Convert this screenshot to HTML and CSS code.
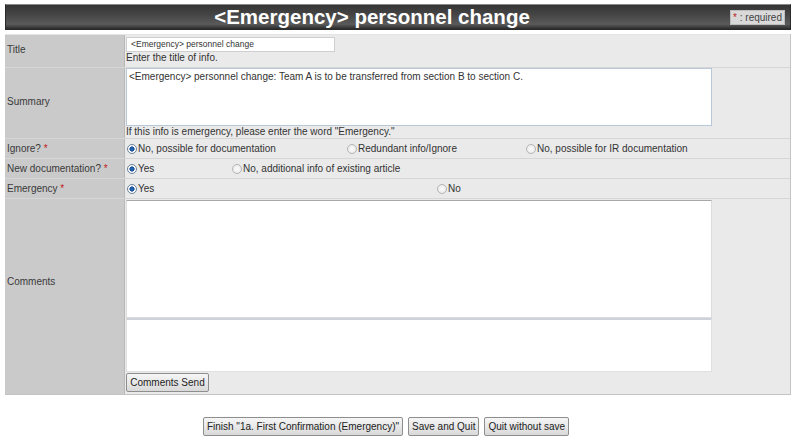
FILE: index.html
```html
<!DOCTYPE html>
<html>
<head>
<meta charset="utf-8">
<link rel="stylesheet" href="styles.css">
</head>
<body>
<div class="page">
  <div class="header">
    <h1 class="title">&lt;Emergency&gt; personnel change</h1>
    <span class="req"><span class="star">*</span> : required</span>
  </div>

  <div class="form">
    <div class="row row-title">
      <div class="label"><span>Title</span></div>
      <div class="value">
        <div class="input">&lt;Emergency&gt; personnel change</div>
        <div class="help">Enter the title of info.</div>
      </div>
    </div>

    <div class="row row-summary">
      <div class="label"><span>Summary</span></div>
      <div class="value">
        <div class="textarea summary">&lt;Emergency&gt; personnel change: Team A is to be transferred from section B to section C.</div>
        <div class="help">If this info is emergency, please enter the word "Emergency."</div>
      </div>
    </div>

    <div class="row row-radio">
      <div class="label"><span>Ignore? <span class="star">*</span></span></div>
      <div class="value options">
        <span class="opt w220"><span class="radio on"></span>No, possible for documentation</span>
        <span class="opt w179"><span class="radio"></span>Redundant info/Ignore</span>
        <span class="opt"><span class="radio"></span>No, possible for IR documentation</span>
      </div>
    </div>

    <div class="row row-radio">
      <div class="label"><span>New documentation? <span class="star">*</span></span></div>
      <div class="value options">
        <span class="opt w105"><span class="radio on"></span>Yes</span>
        <span class="opt"><span class="radio"></span>No, additional info of existing article</span>
      </div>
    </div>

    <div class="row row-radio">
      <div class="label"><span>Emergency <span class="star">*</span></span></div>
      <div class="value options">
        <span class="opt w310"><span class="radio on"></span>Yes</span>
        <span class="opt"><span class="radio"></span>No</span>
      </div>
    </div>

    <div class="row row-comments">
      <div class="label"><span>Comments</span></div>
      <div class="value">
        <div class="textarea comments-log"></div>
        <div class="textarea comments-new"></div>
        <button class="btn send">Comments Send</button>
      </div>
    </div>
  </div>

  <div class="actions">
    <button class="btn">Finish "1a. First Confirmation (Emergency)"</button>
    <button class="btn">Save and Quit</button>
    <button class="btn">Quit without save</button>
  </div>
</div>
</body>
</html>
```

FILE: styles.css
```css
* { box-sizing: border-box; }

html, body {
  margin: 0;
  padding: 0;
  background: #ffffff;
}

body {
  font-family: "Liberation Sans", Arial, sans-serif;
  font-size: 10px;
  color: #333333;
}

.page {
  padding: 4px 9px 0 5px;
}

/* Header */
.header {
  display: flex;
  align-items: center;
  height: 26px;
  background: linear-gradient(to bottom, #353535 0%, #454545 40%, #5a5a5a 80%, #2a2a2a 100%);
  border: 1px solid #2a2a2a;
  border-top-color: #888888;
}

.title {
  flex: 1;
  margin: 0;
  padding-left: 8px;
  text-align: center;
  font-size: 20.5px;
  font-weight: bold;
  color: #ffffff;
  line-height: 24px;
}

.req {
  margin-right: 5px;
  padding: 0 2px;
  height: 15px;
  line-height: 14px;
  background: #d9d9d9;
  border: 1px solid #bdbdbd;
  color: #444;
  font-size: 10px;
}

.star { color: #c02020; }

/* Form */
.form {
  margin-top: 4px;
  border-right: 1px solid #c4c4c4;
  border-bottom: 1px solid #c4c4c4;
}

.row {
  display: flex;
  border-top: 1px solid #d6d6d6;
}

.row:first-child { border-top: 1px solid #e4e4e4; }

.label {
  width: 120px;
  flex: none;
  display: flex;
  align-items: center;
  padding-left: 2px;
  background: #cacaca;
  border-right: 1px solid #b8b8b8;
  color: #3a3a3a;
}

.value {
  flex: 1;
  background: #eaeaea;
  padding: 2px 1px 1px 1px;
}

.row-title { height: 33px; }
.row-title .label { padding-bottom: 3px; }
.row-title .value { padding-top: 2px; }

.input {
  width: 209px;
  height: 15px;
  background: #ffffff;
  border: 1px solid #cfcfcf;
  font-size: 8.5px;
  line-height: 13px;
  padding-left: 4px;
  color: #333;
}

.help {
  line-height: 12px;
  color: #333;
}

.row-summary { height: 71px; }
.row-summary .label { padding-bottom: 3px; }
.row-summary .value { padding-top: 0; }

.textarea {
  background: #ffffff;
}

.summary {
  width: 586px;
  height: 58px;
  border: 1px solid #b8c8d8;
  padding: 2px 2px;
  line-height: 12px;
  color: #333;
}

.row-summary .help { margin-top: 0; line-height: 11px; }

.row-radio { height: 20px; }

.options {
  display: flex;
  align-items: center;
  padding: 0 0 0 2px;
}

.opt {
  display: inline-flex;
  align-items: center;
  white-space: nowrap;
  flex: none;
}

.w220 { width: 220px; }
.w179 { width: 179px; }
.w105 { width: 105px; }
.w310 { width: 310px; }

.radio {
  display: inline-block;
  width: 10px;
  height: 10px;
  margin-right: 1px;
  border-radius: 50%;
  border: 1px solid #b4b4b4;
  background: radial-gradient(circle, #fbfbfb 0, #e6e6e6 100%);
}

.radio.on {
  border-color: #6f8299;
  background: radial-gradient(circle, #2b6cc0 0, #174f94 2.3px, #ffffff 2.9px, #e8eef5 100%);
}

.row-comments { height: 196px; }
.row-comments .label { padding-bottom: 30px; }
.row-comments .value { padding-top: 1px; }

.comments-log {
  width: 586px;
  height: 118px;
  border: 1px solid #dcdcdc;
  border-top-color: #a8a8a8;
}

.comments-new {
  width: 586px;
  height: 54px;
  border: 1px solid #e0e0e0;
  border-top: 2px solid #cdd2d8;
}

.btn {
  font-family: "Liberation Sans", Arial, sans-serif;
  font-size: 10px;
  color: #222;
  height: 19px;
  padding: 0 3px;
  border: 1px solid #8e8e8e;
  border-radius: 2px;
  background: linear-gradient(to bottom, #f6f6f6 0%, #e8e8e8 50%, #d9d9d9 100%);
  line-height: 16px;
}

.send {
  display: block;
  margin-top: 1px;
  margin-left: 0;
  width: 83px;
}

.actions {
  display: flex;
  justify-content: center;
  gap: 5px;
  margin-top: 22px;
  padding-right: 24px;
}
```
